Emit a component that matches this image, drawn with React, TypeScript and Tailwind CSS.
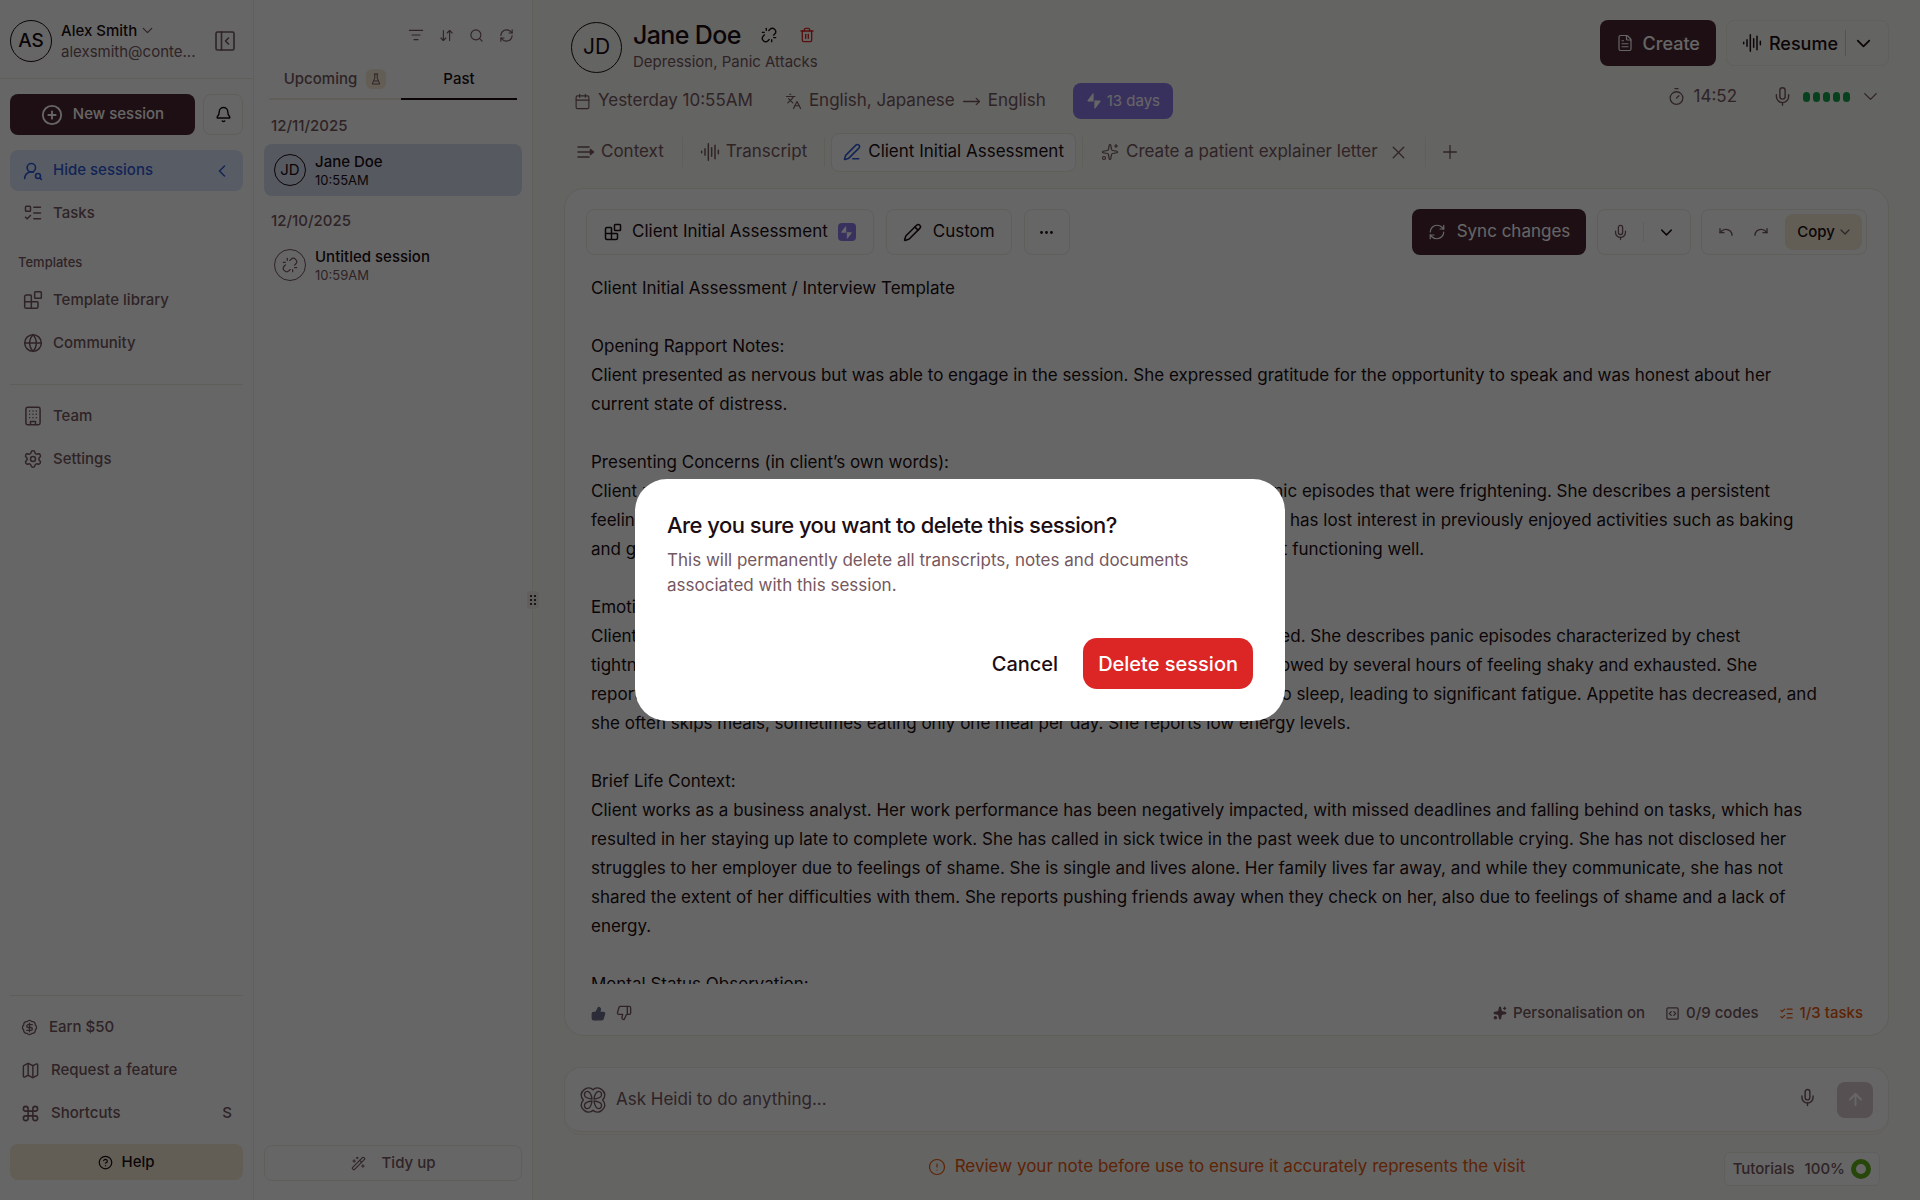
import React from "react";
import {
  ArrowDownUp, ArrowUp, BadgeDollarSign, Bell, Blocks, Calendar, ChevronDown, ChevronLeft, CircleAlert,
  CircleHelp, CirclePlus, Command, Ellipsis, FileText, Globe, Languages, ListChecks, ListFilter, ListTodo,
  Map, Mic, MoveRight, Pencil, PenLine, Plus, Redo, RefreshCw, Search, Settings, Sparkles, SquareCode,
  ThumbsDown, ThumbsUp, Timer, Trash2, Undo, Unlink, UserRoundSearch, WandSparkles, X,
} from "lucide-react";

const INK = "text-[#1c0d12]";
const MUTED = "text-[#755760]";

function Wave({ size = 20 }: { size?: number }) {
  return (
    <svg width={size} height={size} viewBox="0 0 24 24" fill="none" stroke="currentColor" strokeWidth="1.8" strokeLinecap="round" aria-hidden="true">
      <path d="M2 11v2M6 8v8M10 2v20M14 7v10M18 4v16M22 10v4" />
    </svg>
  );
}

function Bolt({ size = 16 }: { size?: number }) {
  return (
    <svg width={size} height={size} viewBox="0 0 16 16" fill="currentColor" aria-hidden="true">
      <path d="M7.600.6v7.800H2.200c-.6 0-.9-.6-.6-1.100L6.400.9c.4-.6 1.200-.8 1.200-.3ZM8.400 15.400V7.600h5.400c.6 0 .9.6.6 1.100L9.600 15.100c-.4.6-1.200.8-1.200.3Z" />
    </svg>
  );
}

function Building() {
  return (
    <svg width="20" height="20" viewBox="0 0 24 24" fill="none" stroke="currentColor" strokeWidth="1.8" strokeLinecap="round" strokeLinejoin="round" aria-hidden="true">
      <rect x="3.5" y="1.5" width="17" height="21" rx="2" />
      <path d="M9 22v-3.500h6V22M8 6h.01M12 6h.01M16 6h.01M8 10h.01M12 10h.01M16 10h.01M8 14h.01M12 14h.01M16 14h.01" />
    </svg>
  );
}

function PanelClose() {
  return (
    <svg width="20" height="20" viewBox="0 0 20 20" fill="none" stroke="currentColor" strokeWidth="1.6" strokeLinecap="round" strokeLinejoin="round" aria-hidden="true">
      <rect x="1" y="1" width="18" height="18" rx="1.5" />
      <path d="M6.500 1v18M13.500 7 10.500 10l3 3" />
    </svg>
  );
}

function Flask() {
  return (
    <svg width="10" height="12" viewBox="0 0 10 12" fill="none" stroke="currentColor" strokeLinecap="round" strokeLinejoin="round" aria-hidden="true">
      <path d="M3.200 1h3.600M3.800 1v4L1.200 11h7.600L6.200 5V1M3 8h4" />
    </svg>
  );
}

function ContextIcon() {
  return (
    <svg width="18" height="18" viewBox="0 0 18 18" fill="none" stroke="currentColor" strokeWidth="1.5" strokeLinecap="round" strokeLinejoin="round" aria-hidden="true">
      <path d="M1 4h11M1 9h15M1 14h11M13.500 6.500 16.500 9l-3 2.500Z" />
    </svg>
  );
}

function HeidiLogo() {
  return (
    <svg width="26" height="26" viewBox="0 0 26 26" fill="none" stroke="currentColor" strokeWidth="1.4" strokeLinejoin="round" aria-hidden="true">
      <path d="M13 2.8C10.8.4 7 .2 4.2 2.6.4 5.6.2 9.6 3.4 13 .2 16.400.4 20.400 4.200 23.400 7 25.800 10.800 25.600 13 23.200c2.200 2.400 6 2.600 8.800.2 3.800-3 4-7 .8-10.400 3.200-3.400 3-7.400-.8-10.400C19 .2 15.200.4 13 2.800Z" />
      <path d="M12 12C11.400 7.800 9.800 4.800 7.600 4.400 5.200 4.200 4 6.600 4.600 8.600 5.400 11 8.600 11.600 12 12ZM14 12c.6-4.200 2.200-7.200 4.400-7.600 2.400-.2 3.600 2.200 3 4.200-.8 2.400-4 3-7.400 3.400ZM12 14c-3.400.4-6.600 1-7.400 3.400-.6 2 .6 4.400 3 4.200C9.800 21.200 11.400 18.200 12 14ZM14 14c3.400.4 6.600 1 7.400 3.400.6 2-.6 4.400-3 4.200C16.200 21.200 14.600 18.200 14 14Z" />
    </svg>
  );
}

function NavItem({ icon, label }: { icon: React.ReactNode; label: string }) {
  return (
    <button className={`flex h-10 w-full items-center gap-[10px] rounded-lg px-[13px] text-[15px] font-medium ${MUTED}`}>
      {icon}
      {label}
    </button>
  );
}

function Sidebar() {
  return (
    <aside className="flex w-[254px] shrink-0 flex-col border-r border-[#f1ede4]">
      <div className="flex h-[79px] shrink-0 items-center border-b border-[#f1ede4] px-[10px] pt-1">
        <div className={`grid size-[42px] shrink-0 place-items-center rounded-full border border-[#1c0d12] text-[19px] font-medium ${INK}`}>AS</div>
        <div className="ml-[9px] w-[136px] text-[15px] leading-[21px]">
          <button className={`flex items-center gap-[2px] font-medium ${INK}`}>
            Alex Smith <ChevronDown size={17} strokeWidth={1.8} className={MUTED} />
          </button>
          <div className={MUTED}>alexsmith@conte...</div>
        </div>
        <button aria-label="Collapse sidebar" className={`ml-[18px] ${MUTED}`}>
          <PanelClose />
        </button>
      </div>

      <div className="flex flex-1 flex-col px-[10px] pt-[15px] pb-5">
        <div className="flex gap-2">
          <button className="flex h-[41px] flex-1 items-center justify-center gap-[10px] rounded-lg bg-[#4c2733] text-[15px] font-medium text-white">
            <CirclePlus size={22} /> New session
          </button>
          <button aria-label="Notifications" className={`grid h-[41px] w-[40px] place-items-center rounded-lg border border-[#efeadf] ${INK}`}>
            <Bell size={17} />
          </button>
        </div>
        <nav className="mt-[15px] flex flex-col">
          <button className="flex h-[41px] items-center gap-[10px] rounded-lg bg-[#dde6fa] pr-[11px] pl-[13px] text-[15px] font-medium text-[#2f5bd7]">
            <UserRoundSearch size={20} />
            Hide sessions
            <ChevronLeft size={20} strokeWidth={1.8} className="ml-auto" />
          </button>
          <div className="mt-[2px] flex flex-col gap-[3px]">
            <NavItem icon={<ListTodo size={20} strokeWidth={1.8} />} label="Tasks" />
          </div>
          <h2 className={`mt-[20px] px-2 text-[13px] font-medium leading-[18px] ${MUTED}`}>Templates</h2>
          <div className="mt-[9px] flex flex-col gap-[3px]">
            <NavItem icon={<Blocks size={20} strokeWidth={1.8} />} label="Template library" />
            <NavItem icon={<Globe size={20} strokeWidth={1.8} />} label="Community" />
          </div>
          <hr className="mt-[21px] mb-[11px] border-[#efeadf]" />
          <div className="flex flex-col gap-[3px]">
            <NavItem icon={<Building />} label="Team" />
            <NavItem icon={<Settings size={20} strokeWidth={1.8} />} label="Settings" />
          </div>
        </nav>
        <div className={`mt-auto flex flex-col gap-[3px] border-t border-[#efeadf] pt-[11px] text-[15px] font-medium ${MUTED}`}>
          <a href="#earn" className="flex h-10 items-center gap-[11px] px-[11px]">
            <BadgeDollarSign size={17} strokeWidth={1.8} /> Earn $50
          </a>
          <a href="#feature" className="flex h-10 items-center gap-[11px] px-[11px]">
            <Map size={19} strokeWidth={1.8} /> Request a feature
          </a>
          <button className="flex h-10 items-center gap-[11px] px-[11px]">
            <Command size={19} /> Shortcuts <span className="ml-auto">S</span>
          </button>
        </div>
        <button className={`mt-[11px] flex h-9 shrink-0 items-center justify-center gap-2 rounded-lg bg-[#f4ebd5] text-[15px] font-medium ${INK}`}>
          <CircleHelp size={15} /> Help
        </button>
      </div>
    </aside>
  );
}

function SessionItem({ avatar, name, time, active }: { avatar: React.ReactNode; name: string; time: string; active?: boolean }) {
  return (
    <button className={`mx-[10px] flex h-[52px] items-center gap-[9px] rounded-lg px-[10px] text-left ${active ? "bg-[#d6deee]" : ""}`}>
      <span className={`grid size-8 shrink-0 place-items-center rounded-full border text-[15px] ${active ? "border-[#1c0d12] text-[#1c0d12]" : "border-[#755760] text-[#755760]"}`}>
        {avatar}
      </span>
      <span>
        <span className={`block text-[15px] font-medium leading-5 ${INK}`}>{name}</span>
        <span className={`block text-[13px] leading-[17px] ${active ? INK : MUTED}`}>{time}</span>
      </span>
    </button>
  );
}

function SessionList() {
  return (
    <section className="flex w-[279px] shrink-0 flex-col border-r border-[#f1ede4]">
      <div className={`flex items-center justify-end gap-[15px] pt-[27px] pr-[18px] ${MUTED}`}>
        <button aria-label="Filter"><ListFilter size={16} strokeWidth={1.8} /></button>
        <button aria-label="Sort"><ArrowDownUp size={15} strokeWidth={1.8} /></button>
        <button aria-label="Search"><Search size={15} strokeWidth={1.8} /></button>
        <button aria-label="Refresh"><RefreshCw size={15} strokeWidth={1.8} /></button>
      </div>
      <div className="mx-[15px] mt-[17px] flex h-10 text-[15px] font-medium" role="tablist">
        <button role="tab" aria-selected="false" className={`flex w-[132px] items-center justify-center gap-[9px] border-b-2 border-[#efeadf] ${MUTED}`}>
          Upcoming
          <span className="grid size-5 place-items-center rounded-md bg-[#f4ebd5]"><Flask /></span>
        </button>
        <button role="tab" aria-selected="true" className={`flex-1 border-b-2 border-[#1c0d12] ${INK}`}>Past</button>
      </div>
      <h3 className={`mt-[15px] px-[17px] text-[15px] font-medium leading-[21px] ${MUTED}`}>12/11/2025</h3>
      <div className="mt-[8px] flex flex-col">
        <SessionItem avatar="JD" name="Jane Doe" time="10:55AM" active />
      </div>
      <h3 className={`mt-[14px] px-[17px] text-[15px] font-medium leading-[21px] ${MUTED}`}>12/10/2025</h3>
      <div className="mt-[8px] flex flex-col">
        <SessionItem avatar={<Unlink size={16} strokeWidth={1.8} />} name="Untitled session" time="10:59AM" />
      </div>
      <button className={`mx-[10px] mt-auto mb-[19px] flex h-9 items-center justify-center gap-4 rounded-lg border border-[#efeadf] text-[15px] font-medium ${MUTED}`}>
        <WandSparkles size={15} strokeWidth={1.8} /> Tidy up
      </button>
    </section>
  );
}

function Divider() {
  return <span className="h-[30px] w-px bg-[#efeadf]" />;
}

function Header() {
  return (
    <header className="pr-[31px] pl-8">
      <div className="flex items-start justify-between pt-5">
        <div className="flex items-center pl-[6px]">
          <div className={`grid size-[51px] place-items-center rounded-full border border-[#1c0d12] text-[21px] ${INK}`}>JD</div>
          <div className="ml-[11px]">
            <div className="flex items-center">
              <h1 className={`text-[25px] font-medium leading-[30px] tracking-tight ${INK}`}>Jane Doe</h1>
              <button aria-label="Unlink" className={`ml-[20px] ${INK}`}><Unlink size={16} /></button>
              <button aria-label="Delete" className="ml-[22px] text-[#dc2626]"><Trash2 size={16} /></button>
            </div>
            <div className={`text-[15px] leading-[24px] ${MUTED}`}>Depression, Panic Attacks</div>
          </div>
        </div>
        <div className="flex gap-[10px]">
          <button className="flex h-[46px] items-center gap-[9px] rounded-lg bg-[#4c2733] px-4 text-[18px] font-medium text-white">
            <FileText size={18} strokeWidth={1.6} /> Create
          </button>
          <div className={`flex h-[46px] items-center rounded-lg border border-[#f1ede4] pr-[13px] pl-[15px] ${INK}`}>
            <button className="flex items-center gap-[7px] text-[18px] font-medium"><Wave /> Resume</button>
            <span className="mr-[6px] ml-[7px] h-[26px] w-px bg-[#d8cfbd]" />
            <button aria-label="More resume options"><ChevronDown size={23} strokeWidth={1.8} /></button>
          </div>
        </div>
      </div>

      <div className={`mt-[9px] flex items-center text-[17px] ${MUTED}`}>
        <span className="flex items-center gap-[7px] pl-[9px]"><Calendar size={17} strokeWidth={1.6} /> Yesterday 10:55AM</span>
        <span className="ml-[32px] flex items-center gap-[7px]">
          <Languages size={17} strokeWidth={1.6} /> English, Japanese <MoveRight size={19} strokeWidth={1.6} /> English
        </span>
        <span className="ml-[27px] flex h-9 items-center gap-[5px] rounded-lg bg-[#8f7be8] px-[13px] text-[15px] text-white"><Bolt /> 13 days</span>
        <span className="mb-[9px] ml-auto flex items-center gap-2"><Timer size={19} strokeWidth={1.6} /> 14:52</span>
        <span className="mr-[7px] mb-[9px] ml-[35px] flex items-center">
          <Mic size={21} strokeWidth={1.6} />
          <span className="ml-[10px] flex gap-[3px]">
            {[0, 1, 2, 3, 4].map((i) => (
              <span key={i} className="h-[10px] w-[7px] rounded-full bg-[#16a34a]" />
            ))}
          </span>
          <ChevronDown size={23} className="ml-[9px]" strokeWidth={1.4} />
        </span>
      </div>

      <nav className={`mt-[14px] flex h-[38px] items-center text-[17px] ${MUTED}`}>
        <button className="flex items-center gap-[6px] pr-[18px] pl-[12px]"><ContextIcon /> Context</button>
        <Divider />
        <button className="flex items-center gap-[6px] px-[17px]"><Wave /> Transcript</button>
        <Divider />
        <button className={`mx-[6px] flex h-[39px] items-center gap-[7px] rounded-lg border border-[#efeadf] bg-white px-[11px] ${INK}`}>
          <PenLine size={18} className="text-[#2f5bd7]" /> Client Initial Assessment
        </button>
        <Divider />
        <button className="ml-[18px] flex items-center gap-[7px]"><Sparkles size={18} strokeWidth={1.6} /> Create a patient explainer letter</button>
        <button aria-label="Close tab" className="mr-[16px] ml-[10px]"><X size={21} strokeWidth={1.5} /></button>
        <Divider />
        <button aria-label="Add tab" className="ml-[13px]"><Plus size={22} strokeWidth={1.4} /></button>
      </nav>
    </header>
  );
}

const NOTE: string[] = [
  "Client Initial Assessment / Interview Template",
  "",
  "Opening Rapport Notes:",
  "Client presented as nervous but was able to engage in the session. She expressed gratitude for the opportunity to speak and was honest about her current state of distress.",
  "",
  "Presenting Concerns (in client’s own words):",
  "Client reports feeling overwhelmed by constant worry and low mood, and has had panic episodes that were frightening. She describes a persistent feeling of sadness and hopelessness that has now lasted for the past two months. She has lost interest in previously enjoyed activities such as baking and gardening. She states that she “can’t switch off” and is now worried that she is not functioning well.",
  "",
  "Emotional and Physical Symptoms:",
  "Client reports feeling anxious, irritable and tearful most days, and often easily frightened. She describes panic episodes characterized by chest tightness, shortness of breath, sweating and dizziness, lasting for ten minutes and followed by several hours of feeling shaky and exhausted. She reports waking several times a night with a racing mind and being unable to get back to sleep, leading to significant fatigue. Appetite has decreased, and she often skips meals, sometimes eating only one meal per day. She reports low energy levels.",
  "",
  "Brief Life Context:",
  "Client works as a business analyst. Her work performance has been negatively impacted, with missed deadlines and falling behind on tasks, which has resulted in her staying up late to complete work. She has called in sick twice in the past week due to uncontrollable crying. She has not disclosed her struggles to her employer due to feelings of shame. She is single and lives alone. Her family lives far away, and while they communicate, she has not shared the extent of her difficulties with them. She reports pushing friends away when they check on her, also due to feelings of shame and a lack of energy.",
  "",
  "Mental Status Observation:",
];

function NoteCard() {
  return (
    <section className="mt-[17px] mr-[31px] ml-[31px] flex min-h-0 flex-1 flex-col rounded-[20px] border border-[#efeadf] bg-white">
      <div className={`mt-5 flex h-[46px] shrink-0 items-center px-[21px] ${INK}`}>
        <button className="flex h-[46px] items-center gap-[10px] rounded-lg border border-[#efeadf] px-[17px] text-[17px]">
          <Blocks size={18} /> Client Initial Assessment
          <span className="grid size-[18px] place-items-center rounded bg-[#8f7be8] text-white"><Bolt size={13} /></span>
        </button>
        <button className="ml-[12px] flex h-[46px] items-center gap-[11px] rounded-lg border border-[#efeadf] px-4 text-[17px]">
          <Pencil size={19} /> Custom
        </button>
        <button aria-label="More" className="ml-[12px] grid h-[46px] w-[46px] place-items-center rounded-lg border border-[#efeadf]"><Ellipsis size={17} /></button>
        <button className="ml-auto flex h-[46px] items-center gap-[11px] rounded-lg bg-[#4c2733] px-4 text-[17px] text-white">
          <RefreshCw size={18} strokeWidth={1.6} /> Sync changes
        </button>
        <div className="ml-[11px] flex h-[46px] items-center rounded-lg border border-[#efeadf] px-[14px]">
          <button aria-label="Dictate" className={MUTED}><Mic size={17} strokeWidth={1.8} /></button>
          <span className="mr-[13px] ml-[14px] h-5 w-px bg-[#efeadf]" />
          <button aria-label="Dictation options"><ChevronDown size={19} strokeWidth={1.8} /></button>
        </div>
        <div className="ml-[10px] flex h-[46px] items-center rounded-lg border border-[#efeadf] pr-1 pl-4">
          <button aria-label="Undo" className={MUTED}><Undo size={16} /></button>
          <button aria-label="Redo" className={`mr-4 ml-[19px] ${MUTED}`}><Redo size={16} /></button>
          <button className="flex h-9 items-center gap-[2px] rounded-lg bg-[#f4ebd5] pr-[9px] pl-[12px] text-[15px] font-medium">
            Copy <ChevronDown size={16} strokeWidth={1.8} className={MUTED} />
          </button>
        </div>
      </div>
      <article className={`mt-[19px] min-h-0 flex-1 overflow-hidden pr-[69px] pl-[26px] text-[17px] leading-[29px] ${INK}`}>
        {NOTE.map((line, i) => (
          <p key={i} className="min-h-[29px]">{line}</p>
        ))}
      </article>
      <div className={`flex h-[51px] shrink-0 items-center pt-[7px] pr-[25px] pl-[26px] text-[15px] font-medium ${MUTED}`}>
        <button aria-label="Good note" className="text-[#6b6f8a]"><ThumbsUp size={15} fill="currentColor" /></button>
        <button aria-label="Bad note" className="ml-[10px]"><ThumbsDown size={16} /></button>
        <button className="ml-auto flex items-center gap-[6px]"><Sparkles size={14} fill="currentColor" /> Personalisation on</button>
        <button className="ml-[20px] flex items-center gap-[6px]"><SquareCode size={15} /> 0/9 codes</button>
        <button className="ml-[20px] flex items-center gap-[6px] text-[#ea580c]"><ListChecks size={15} /> 1/3 tasks</button>
      </div>
    </section>
  );
}

function Main() {
  return (
    <main className="relative flex min-w-0 flex-1 flex-col bg-[#fbf9f4]">
      <Header />
      <NoteCard />
      <div className="mt-[31px] mr-[31px] ml-[31px] shrink-0 rounded-[16px] border border-[#f1ede4] pb-[2px]">
        <form className={`flex h-16 items-center rounded-[16px] border-b border-[#efeadf] bg-white pr-[15px] pl-[15px] ${MUTED}`} onSubmit={(e) => e.preventDefault()}>
          <HeidiLogo />
          <input aria-label="Ask Heidi" placeholder="Ask Heidi to do anything..." className="ml-[10px] flex-1 bg-transparent text-[17px] outline-none placeholder:text-[#755760]" />
          <button type="button" aria-label="Dictate" className="mb-1"><Mic size={19} strokeWidth={1.8} /></button>
          <button type="submit" aria-label="Send" className="ml-5 grid size-9 place-items-center rounded-lg bg-[#d9c9ce] text-white"><ArrowUp size={19} strokeWidth={2.5} /></button>
        </form>
      </div>
      <footer className="relative flex h-[65px] shrink-0 items-center justify-center pb-px text-[#ea580c]">
        <p className="flex items-center gap-[9px] text-[17px]"><CircleAlert size={18} strokeWidth={1.6} /> Review your note before use to ensure it accurately represents the visit</p>
        <button className={`absolute right-[40px] bottom-[14px] flex h-[34px] items-center rounded-md border border-[#f1ede4] bg-white px-2 text-[15px] font-medium ${MUTED}`}>
          Tutorials <span className="mr-[6px] ml-[10px]">100%</span>
          <span className="size-5 rounded-full border-[5px] border-[#62b018]" />
        </button>
      </footer>
      <button aria-label="Resize panel" className={`absolute top-1/2 left-[-6px] grid h-[18px] w-3 -translate-y-1/2 place-items-center rounded bg-[#f1ede4] ${INK}`}>
        <svg width="8" height="12" viewBox="0 0 8 12" fill="currentColor" aria-hidden="true">
          <circle cx="2" cy="2" r="1.1" /><circle cx="6" cy="2" r="1.1" /><circle cx="2" cy="6" r="1.1" /><circle cx="6" cy="6" r="1.1" /><circle cx="2" cy="10" r="1.1" /><circle cx="6" cy="10" r="1.1" />
        </svg>
      </button>
    </main>
  );
}

function DeleteDialog() {
  return (
    <div className="fixed inset-0 grid place-items-center bg-black/60">
      <div role="dialog" aria-modal="true" aria-labelledby="delete-title" className="w-[650px] rounded-[32px] bg-white p-8">
        <h2 id="delete-title" className={`text-[22px] font-medium leading-[28px] tracking-tight ${INK}`}>Are you sure you want to delete this session?</h2>
        <p className={`mt-[9px] pr-12 text-[17px] leading-[25px] ${MUTED}`}>This will permanently delete all transcripts, notes and documents associated with this session.</p>
        <div className="mt-10 flex items-center justify-end gap-[25px]">
          <button className={`text-[20px] font-medium ${INK}`}>Cancel</button>
          <button className="h-[51px] rounded-[14px] bg-[#dc2626] px-[15px] text-[20px] font-medium text-white">Delete session</button>
        </div>
      </div>
    </div>
  );
}

export default function App() {
  return (
    <div className="flex h-screen overflow-hidden bg-white font-['Inter',sans-serif]">
      <Sidebar />
      <SessionList />
      <Main />
      <DeleteDialog />
    </div>
  );
}
